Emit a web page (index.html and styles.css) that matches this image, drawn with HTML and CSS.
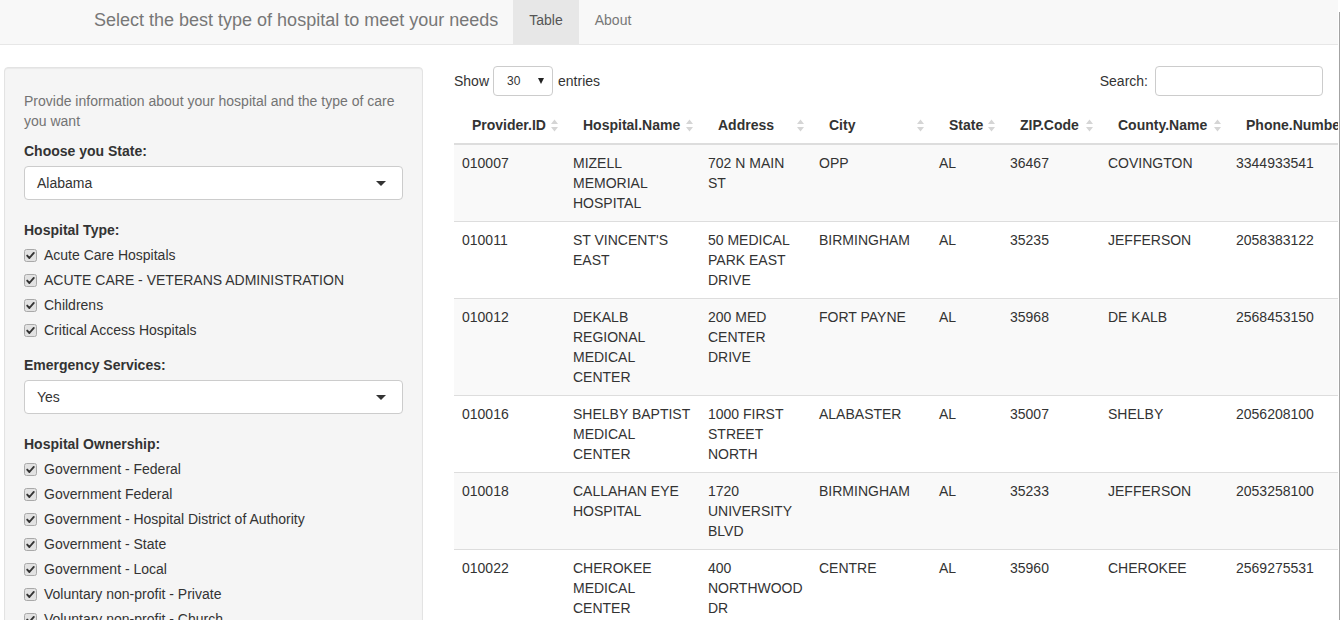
FILE: index.html
```html
<!DOCTYPE html>
<html>
<head>
<meta charset="utf-8">
<title>Hospitals</title>
<link rel="stylesheet" href="styles.css">
</head>
<body>
<div class="page">
  <nav class="navbar">
    <span class="brand">Select the best type of hospital to meet your needs</span>
    <ul class="nav">
      <li class="active"><a>Table</a></li>
      <li><a>About</a></li>
    </ul>
  </nav>
  <div class="layout">
    <aside class="well">
      <p class="help">Provide information about your hospital and the type of care you want</p>

      <div class="group sel-group">
        <div class="lbl">Choose you State:</div>
        <div class="select"><span>Alabama</span><span class="caret"></span></div>
      </div>

      <div class="group cb-group">
        <div class="lbl">Hospital Type:</div>
        <div class="cb"><svg class="box" viewBox="0 0 13 13"><rect x="0.5" y="0.5" width="12" height="12" rx="2"/><path d="M3.2 6.6 L5.4 9 L9.8 3.9"/></svg><span>Acute Care Hospitals</span></div>
        <div class="cb"><svg class="box" viewBox="0 0 13 13"><rect x="0.5" y="0.5" width="12" height="12" rx="2"/><path d="M3.2 6.6 L5.4 9 L9.8 3.9"/></svg><span>ACUTE CARE - VETERANS ADMINISTRATION</span></div>
        <div class="cb"><svg class="box" viewBox="0 0 13 13"><rect x="0.5" y="0.5" width="12" height="12" rx="2"/><path d="M3.2 6.6 L5.4 9 L9.8 3.9"/></svg><span>Childrens</span></div>
        <div class="cb"><svg class="box" viewBox="0 0 13 13"><rect x="0.5" y="0.5" width="12" height="12" rx="2"/><path d="M3.2 6.6 L5.4 9 L9.8 3.9"/></svg><span>Critical Access Hospitals</span></div>
      </div>

      <div class="group sel-group">
        <div class="lbl">Emergency Services:</div>
        <div class="select"><span>Yes</span><span class="caret"></span></div>
      </div>

      <div class="group cb-group">
        <div class="lbl">Hospital Ownership:</div>
        <div class="cb"><svg class="box" viewBox="0 0 13 13"><rect x="0.5" y="0.5" width="12" height="12" rx="2"/><path d="M3.2 6.6 L5.4 9 L9.8 3.9"/></svg><span>Government - Federal</span></div>
        <div class="cb"><svg class="box" viewBox="0 0 13 13"><rect x="0.5" y="0.5" width="12" height="12" rx="2"/><path d="M3.2 6.6 L5.4 9 L9.8 3.9"/></svg><span>Government Federal</span></div>
        <div class="cb"><svg class="box" viewBox="0 0 13 13"><rect x="0.5" y="0.5" width="12" height="12" rx="2"/><path d="M3.2 6.6 L5.4 9 L9.8 3.9"/></svg><span>Government - Hospital District of Authority</span></div>
        <div class="cb"><svg class="box" viewBox="0 0 13 13"><rect x="0.5" y="0.5" width="12" height="12" rx="2"/><path d="M3.2 6.6 L5.4 9 L9.8 3.9"/></svg><span>Government - State</span></div>
        <div class="cb"><svg class="box" viewBox="0 0 13 13"><rect x="0.5" y="0.5" width="12" height="12" rx="2"/><path d="M3.2 6.6 L5.4 9 L9.8 3.9"/></svg><span>Government - Local</span></div>
        <div class="cb"><svg class="box" viewBox="0 0 13 13"><rect x="0.5" y="0.5" width="12" height="12" rx="2"/><path d="M3.2 6.6 L5.4 9 L9.8 3.9"/></svg><span>Voluntary non-profit - Private</span></div>
        <div class="cb"><svg class="box" viewBox="0 0 13 13"><rect x="0.5" y="0.5" width="12" height="12" rx="2"/><path d="M3.2 6.6 L5.4 9 L9.8 3.9"/></svg><span>Voluntary non-profit - Church</span></div>
        <div class="cb"><svg class="box" viewBox="0 0 13 13"><rect x="0.5" y="0.5" width="12" height="12" rx="2"/><path d="M3.2 6.6 L5.4 9 L9.8 3.9"/></svg><span>Voluntary non-profit - Other</span></div>
      </div>
    </aside>

    <main class="main">
      <div class="controls">
        <div class="length">
          <span>Show</span>
          <span class="len-select"><span>30</span><span class="tri"></span></span>
          <span>entries</span>
        </div>
        <div class="search">
          <span>Search:</span>
          <span class="search-input"></span>
        </div>
      </div>

      <table class="dt">
        <colgroup>
          <col class="w1"><col class="w2"><col class="w3"><col class="w4"><col class="w5"><col class="w6"><col class="w7"><col class="w8">
        </colgroup>
        <thead>
          <tr>
            <th>Provider.ID<svg class="sort" viewBox="0 0 7 13"><path d="M0 5 L3.5 0.5 L7 5 Z M0 8 L3.5 12.5 L7 8 Z"/></svg></th>
            <th>Hospital.Name<svg class="sort" viewBox="0 0 7 13"><path d="M0 5 L3.5 0.5 L7 5 Z M0 8 L3.5 12.5 L7 8 Z"/></svg></th>
            <th>Address<svg class="sort" viewBox="0 0 7 13"><path d="M0 5 L3.5 0.5 L7 5 Z M0 8 L3.5 12.5 L7 8 Z"/></svg></th>
            <th>City<svg class="sort" viewBox="0 0 7 13"><path d="M0 5 L3.5 0.5 L7 5 Z M0 8 L3.5 12.5 L7 8 Z"/></svg></th>
            <th>State<svg class="sort" viewBox="0 0 7 13"><path d="M0 5 L3.5 0.5 L7 5 Z M0 8 L3.5 12.5 L7 8 Z"/></svg></th>
            <th>ZIP.Code<svg class="sort" viewBox="0 0 7 13"><path d="M0 5 L3.5 0.5 L7 5 Z M0 8 L3.5 12.5 L7 8 Z"/></svg></th>
            <th>County.Name<svg class="sort" viewBox="0 0 7 13"><path d="M0 5 L3.5 0.5 L7 5 Z M0 8 L3.5 12.5 L7 8 Z"/></svg></th>
            <th>Phone.Number<svg class="sort" viewBox="0 0 7 13"><path d="M0 5 L3.5 0.5 L7 5 Z M0 8 L3.5 12.5 L7 8 Z"/></svg></th>
          </tr>
        </thead>
        <tbody>
          <tr><td>010007</td><td>MIZELL MEMORIAL HOSPITAL</td><td>702 N MAIN ST</td><td>OPP</td><td>AL</td><td>36467</td><td>COVINGTON</td><td>3344933541</td></tr>
          <tr><td>010011</td><td>ST VINCENT'S EAST</td><td>50 MEDICAL PARK EAST DRIVE</td><td>BIRMINGHAM</td><td>AL</td><td>35235</td><td>JEFFERSON</td><td>2058383122</td></tr>
          <tr><td>010012</td><td>DEKALB REGIONAL MEDICAL CENTER</td><td>200 MED CENTER DRIVE</td><td>FORT PAYNE</td><td>AL</td><td>35968</td><td>DE KALB</td><td>2568453150</td></tr>
          <tr><td>010016</td><td>SHELBY BAPTIST MEDICAL CENTER</td><td>1000 FIRST STREET NORTH</td><td>ALABASTER</td><td>AL</td><td>35007</td><td>SHELBY</td><td>2056208100</td></tr>
          <tr><td>010018</td><td>CALLAHAN EYE HOSPITAL</td><td>1720 UNIVERSITY BLVD</td><td>BIRMINGHAM</td><td>AL</td><td>35233</td><td>JEFFERSON</td><td>2053258100</td></tr>
          <tr><td>010022</td><td>CHEROKEE MEDICAL CENTER</td><td>400 NORTHWOOD DR</td><td>CENTRE</td><td>AL</td><td>35960</td><td>CHEROKEE</td><td>2569275531</td></tr>
        </tbody>
      </table>
    </main>
  </div>
</div>
<div class="vscroll"></div>
</body>
</html>
```

FILE: styles.css
```css
* { box-sizing: border-box; }
html, body { margin: 0; padding: 0; }
body {
  font-family: "Liberation Sans", Arial, sans-serif;
  font-size: 14px;
  line-height: 20px;
  color: #333;
  background: #fff;
  overflow: hidden;
}
.page {
  width: 1338px;
  height: 620px;
  overflow: hidden;
}

/* navbar */
.navbar {
  display: flex;
  height: 45px;
  background: #f8f8f8;
  border-bottom: 1px solid #e7e7e7;
  padding-left: 79px;
}
.brand {
  padding: 10px 15px 0 15px;
  font-size: 18px;
  line-height: 20px;
  color: #777;
}
.nav {
  display: flex;
  list-style: none;
  margin: 0;
  padding: 0;
}
.nav a {
  display: block;
  height: 44px;
  padding: 10px 16px 0 16px;
  line-height: 20px;
  color: #777;
}
.nav .active a {
  background: #e7e7e7;
  color: #555;
}

/* layout */
.layout {
  display: flex;
  align-items: flex-start;
  padding-top: 21px;
}

/* sidebar */
.well {
  flex: none;
  width: 419px;
  min-height: 600px;
  margin-left: 4px;
  margin-top: 1px;
  padding: 19px;
  background: #f5f5f5;
  border: 1px solid #e3e3e3;
  border-radius: 4px;
  box-shadow: inset 0 1px 1px rgba(0, 0, 0, 0.05);
}
.help {
  margin: 4px 0 10px 0;
  color: #737373;
}
.lbl {
  font-weight: bold;
  margin-bottom: 5px;
}
.sel-group { margin-bottom: 20px; }
.cb-group { margin-bottom: 15px; }
.select {
  display: flex;
  align-items: center;
  justify-content: space-between;
  height: 34px;
  padding: 0 16px 0 12px;
  background: #fff;
  border: 1px solid #ccc;
  border-radius: 4px;
  color: #333;
}
.caret {
  width: 0;
  height: 0;
  border-top: 5px solid #333;
  border-left: 5px solid transparent;
  border-right: 5px solid transparent;
}
.cb {
  display: flex;
  align-items: flex-start;
  height: 20px;
  margin-bottom: 5px;
}
.cb:last-child { margin-bottom: 0; }
.box {
  width: 13px;
  height: 13px;
  margin-top: 4px;
  margin-right: 7px;
  flex: none;
}
.box rect {
  fill: #e2e2e2;
  stroke: #a9a9a9;
  stroke-width: 1;
}
.box path {
  fill: none;
  stroke: #333;
  stroke-width: 1.9;
  stroke-linecap: round;
  stroke-linejoin: round;
}

/* main */
.main {
  flex: 1;
  min-width: 0;
  padding: 0 15px 0 31px;
}
.controls {
  display: flex;
  justify-content: space-between;
  align-items: center;
  height: 30px;
}
.length, .search {
  display: flex;
  align-items: center;
}
.len-select {
  display: flex;
  align-items: center;
  justify-content: space-between;
  width: 60px;
  height: 30px;
  margin: 0 5px 0 4px;
  padding: 0 8px 0 13px;
  border: 1px solid #ccc;
  border-radius: 4px;
  background: #fff;
  font-size: 12px;
}
.tri {
  width: 0;
  height: 0;
  border-top: 6px solid #222;
  border-left: 3.5px solid transparent;
  border-right: 3.5px solid transparent;
}
.search-input {
  display: block;
  width: 168px;
  height: 30px;
  margin-left: 7px;
  border: 1px solid #ccc;
  border-radius: 4px;
  background: #fff;
}

/* table */
.dt {
  table-layout: fixed;
  width: 908px;
  margin-top: 11px;
  border-collapse: separate;
  border-spacing: 0;
}
.w1 { width: 111px; }
.w2 { width: 135px; }
.w3 { width: 111px; }
.w4 { width: 120px; }
.w5 { width: 71px; }
.w6 { width: 98px; }
.w7 { width: 128px; }
.w8 { width: 134px; }
.dt th {
  position: relative;
  padding: 8px 18px;
  text-align: left;
  font-weight: bold;
  white-space: nowrap;
  border-bottom: 2px solid #ddd;
}
.sort {
  position: absolute;
  right: 7px;
  top: 50%;
  width: 7px;
  height: 13px;
  margin-top: -6px;
  fill: #d5d5d5;
}
.dt td {
  padding: 8px;
  vertical-align: top;
}
.dt tbody tr + tr td { border-top: 1px solid #ddd; }
.dt tbody tr:nth-child(odd) td { background: #f9f9f9; }

.vscroll {
  position: fixed;
  top: 12px;
  bottom: 0;
  left: 1339px;
  width: 1px;
  background: #a3a3a3;
}
```
